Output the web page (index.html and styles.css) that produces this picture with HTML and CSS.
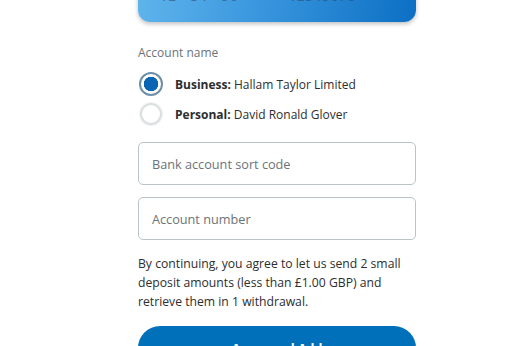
FILE: index.html
```html
<!DOCTYPE html>
<html>
<head>
  <meta charset="UTF-8">
  <title>Link a bank account</title>
  <link rel="stylesheet" href="styles.css">
</head>
<body>
  <div class="wrap">
    <div class="card">
      <span class="card-sort">12 - 34 - 56</span>
      <span class="card-acct">12345678</span>
    </div>

    <p class="label">Account name</p>
    <label class="radio-row">
      <input type="radio" name="acct" checked>
      <span class="radio"></span>
      <span><b>Business:</b> Hallam Taylor Limited</span>
    </label>
    <label class="radio-row">
      <input type="radio" name="acct">
      <span class="radio"></span>
      <span><b>Personal:</b> David Ronald Glover</span>
    </label>

    <input class="field" type="text" placeholder="Bank account sort code">
    <input class="field" type="text" placeholder="Account number">

    <p class="terms">By continuing, you agree to let us send 2 small deposit amounts (less than £1.00 GBP) and retrieve them in 1 withdrawal.</p>

    <button class="btn">Agree and Add</button>
  </div>
</body>
</html>
```

FILE: styles.css
```css
html {font-family: "Open Sans", "Noto Sans", sans-serif; color: #2c2e2f;}
body {margin: 0; background: #fff; overflow: hidden;}

.wrap {
	width: 278px;
	margin-left: 138px;
	margin-top: -60px;
}

.card {
	height: 82px;
	border-radius: 12px;
	background: linear-gradient(100deg, #62b6ec 0%, #3a97de 45%, #0c6fc4 100%);
	box-shadow: 0 2px 4px rgba(0, 0, 0, 0.25);
	display: flex;
	align-items: flex-end;
	gap: 50px;
	padding: 0 22px 18px;
	box-sizing: border-box;
	color: rgba(40, 70, 110, 0.55);
	font-size: 13px;
	line-height: 16px;
	letter-spacing: 1px;
	font-weight: 600;
}

.label {
	margin: 22px 0 8px;
	font-size: 12px;
	color: #6c7378;
}

.radio-row {
	display: flex;
	align-items: center;
	gap: 13px;
	height: 30px;
	font-size: 12px;
	margin-left: 2px;
}
.radio-row input {display: none;}
.radio-row b {font-weight: 700;}

.radio {
	width: 22px;
	height: 22px;
	border: 2px solid #dcdfe0;
	border-radius: 50%;
	box-sizing: border-box;
	box-shadow: 0 0 0 1px #f0f2f3;
	flex: none;
}
input:checked + .radio {
	border-color: #6f8fa6;
	width: 24px;
	height: 24px;
	margin-left: -1px;
	margin-right: -1px;
	box-shadow: none;
	background: radial-gradient(circle, #0a66b5 0 7px, #fff 7.5px);
}

.field {
	display: block;
	width: 100%;
	height: 43px;
	margin-top: 12px;
	padding: 0 13px;
	box-sizing: border-box;
	border: 1px solid #b9c4c9;
	border-radius: 5px;
	font-family: inherit;
	font-size: 12.7px;
	color: #2c2e2f;
}
.field:first-of-type {margin-top: 13px;}
.field::placeholder {color: #6c7378;}

.terms {
	margin: 14px 0 0;
	font-size: 12.2px;
	line-height: 19px;
}

.btn {
	display: block;
	width: 100%;
	height: 44px;
	margin-top: 15px;
	border: 0;
	border-radius: 22px;
	background: #0070ba;
	color: #fff;
	font-family: inherit;
	font-size: 12.5px;
	font-weight: 700;
	padding-top: 2px;
}
```
